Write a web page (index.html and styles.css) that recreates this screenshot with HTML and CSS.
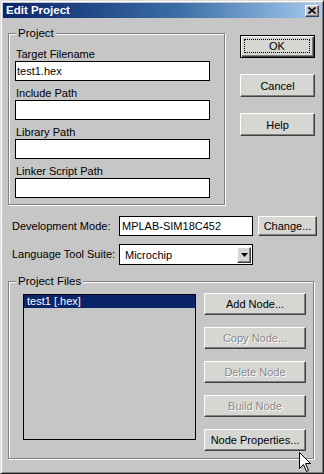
FILE: index.html
```html
<!DOCTYPE html>
<html>
<head>
<meta charset="utf-8">
<link rel="stylesheet" href="styles.css">
</head>
<body>
<div class="window">
  <div class="titlebar">
    <span class="title">Edit Project</span>
    <span class="close"><svg width="8" height="7" viewBox="0 0 8 7"><path d="M0.5 0.5 L7.5 6.5 M7.5 0.5 L0.5 6.5" stroke="#000" stroke-width="1.6"/></svg></span>
  </div>
  <div class="client">
    <div class="top">
      <div class="group project">
        <span class="legend">Project</span>
        <div class="lbl">Target Filename</div>
        <div class="field">test1.hex</div>
        <div class="lbl">Include Path</div>
        <div class="field"></div>
        <div class="lbl">Library Path</div>
        <div class="field"></div>
        <div class="lbl">Linker Script Path</div>
        <div class="field"></div>
      </div>
      <div class="actions">
        <div class="btn default"><span class="focus">OK</span></div>
        <div class="btn">Cancel</div>
        <div class="btn">Help</div>
      </div>
    </div>
    <div class="row dev">
      <span class="rlbl">Development Mode:</span>
      <div class="field wide">MPLAB-SIM18C452</div>
      <div class="btn small">Change...</div>
    </div>
    <div class="row lang">
      <span class="rlbl">Language Tool Suite:</span>
      <div class="combo"><span class="ctext">Microchip</span><span class="drop"><svg width="7" height="4" viewBox="0 0 7 4"><path d="M0 0 H7 L3.5 4 Z" fill="#000"/></svg></span></div>
    </div>
    <div class="group files">
      <span class="legend">Project Files</span>
      <div class="list"><div class="item sel">test1 [.hex]</div></div>
      <div class="nodebtns">
        <div class="btn node">Add Node...</div>
        <div class="btn node disabled">Copy Node...</div>
        <div class="btn node disabled">Delete Node</div>
        <div class="btn node disabled">Build Node</div>
        <div class="btn node">Node Properties...</div>
      </div>
    </div>
  </div>
  <svg class="cursor" width="13" height="21" viewBox="0 0 13 21"><path d="M0.5 0.5 L0.5 16.5 L4.5 12.5 L7.5 19.5 L9.5 18.5 L6.5 11.5 L11.5 11.5 Z" fill="#fff" stroke="#000" stroke-width="1"/></svg>
</div>
</body>
</html>
```
FILE: styles.css
```css
* { box-sizing: border-box; }
html, body { margin: 0; padding: 0; background: #c6c6c6; }
body {
  font-family: "Liberation Sans", Arial, sans-serif;
  font-size: 11px;
  color: #000;
}
.window {
  position: relative;
  width: 324px;
  height: 474px;
  background: #c6c6c6;
  border: 1px solid;
  border-color: #dcdcdc #202020 #202020 #dcdcdc;
  box-shadow: inset 1px 1px 0 #fff, inset -1px -1px 0 #808080;
  padding: 2px;
  overflow: hidden;
}
.titlebar {
  height: 15px;
  background: linear-gradient(to right, #0a246a 0%, #3a6ea5 55%, #a6caf0 100%);
  display: flex;
  align-items: center;
  justify-content: space-between;
  padding: 0 2px 0 3px;
}
.title {
  color: #fff;
  font-weight: bold;
  font-size: 11.5px;
  line-height: 15px;
}
.close {
  width: 14px;
  height: 12px;
  background: #c6c6c6;
  border: 1px solid;
  border-color: #fff #404040 #404040 #fff;
  box-shadow: inset -1px -1px 0 #808080;
  display: flex;
  align-items: center;
  justify-content: center;
  padding-bottom: 1px;
}
.client {
  padding: 15px 0 0 5px;
}
.top {
  display: flex;
  align-items: flex-start;
}
.group {
  position: relative;
  border: 1px solid #808080;
  box-shadow: 1px 1px 0 #fff, inset 1px 1px 0 #fff;
}
.legend {
  position: absolute;
  top: -7px;
  left: 7px;
  background: #c6c6c6;
  padding: 0 2px 0 2px;
  line-height: 13px;
  font-size: 11.5px;
}
.project {
  width: 217px;
  height: 172px;
  padding: 13px 0 0 6px;
}
.lbl {
  line-height: 14px;
  height: 14px;
  padding-left: 1px;
}
.field {
  background: #fff;
  border: 1px solid #000;
  height: 20px;
  width: 195px;
  margin-bottom: 5px;
  line-height: 18px;
  padding-left: 1px;
  white-space: nowrap;
}
.actions {
  margin-left: 15px;
  margin-top: 2px;
  display: flex;
  flex-direction: column;
  gap: 16px;
}
.btn {
  width: 75px;
  height: 23px;
  background: #d6d6d2;
  border: 1px solid;
  border-color: #fff #404040 #404040 #fff;
  box-shadow: inset -1px -1px 0 #808080;
  display: flex;
  align-items: center;
  justify-content: center;
  white-space: nowrap;
}
.btn.default {
  border: 1px solid #000;
  box-shadow: inset 1px 1px 0 #fff, inset -1px -1px 0 #404040, inset -2px -2px 0 #808080;
  padding: 3px 4px 4px 3px;
}
.focus {
  flex: 1;
  height: 100%;
  border: 1px dotted #000;
  display: flex;
  align-items: center;
  justify-content: center;
}
.row {
  display: flex;
  align-items: center;
}
.rlbl {
  width: 111px;
  padding-left: 4px;
  line-height: 13px;
}
.dev { margin-top: 11px; }
.field.wide {
  width: 134px;
  margin: 0;
  padding-left: 2px;
}
.btn.small {
  width: 59px;
  height: 20px;
  margin-left: 5px;
}
.lang { margin-top: 8px; }
.combo {
  width: 134px;
  height: 21px;
  background: #fff;
  border: 1px solid #000;
  display: flex;
  align-items: center;
  justify-content: space-between;
  padding: 0 1px 0 5px;
}
.drop {
  width: 14px;
  height: 16px;
  background: #d6d6d2;
  border: 1px solid;
  border-color: #fff #404040 #404040 #fff;
  box-shadow: inset -1px -1px 0 #808080;
  display: flex;
  align-items: center;
  justify-content: center;
}
.files {
  margin-top: 16px;
  width: 306px;
  height: 178px;
  display: flex;
  align-items: flex-start;
  padding: 12px 0 0 14px;
}
.list {
  width: 173px;
  height: 146px;
  border: 1px solid #000;
  background: #c6c6c6;
}
.item {
  height: 13px;
  line-height: 13px;
  padding-left: 3px;
}
.item.sel {
  background: #0a246a;
  color: #fff;
}
.nodebtns {
  margin-left: 8px;
  margin-top: -1px;
  display: flex;
  flex-direction: column;
  gap: 12px;
}
.btn.node {
  width: 102px;
  height: 22px;
}
.btn.disabled {
  color: #8a8a8a;
  text-shadow: 1px 1px 0 #fff;
}
.cursor {
  position: absolute;
  left: 298px;
  top: 451px;
}
```
